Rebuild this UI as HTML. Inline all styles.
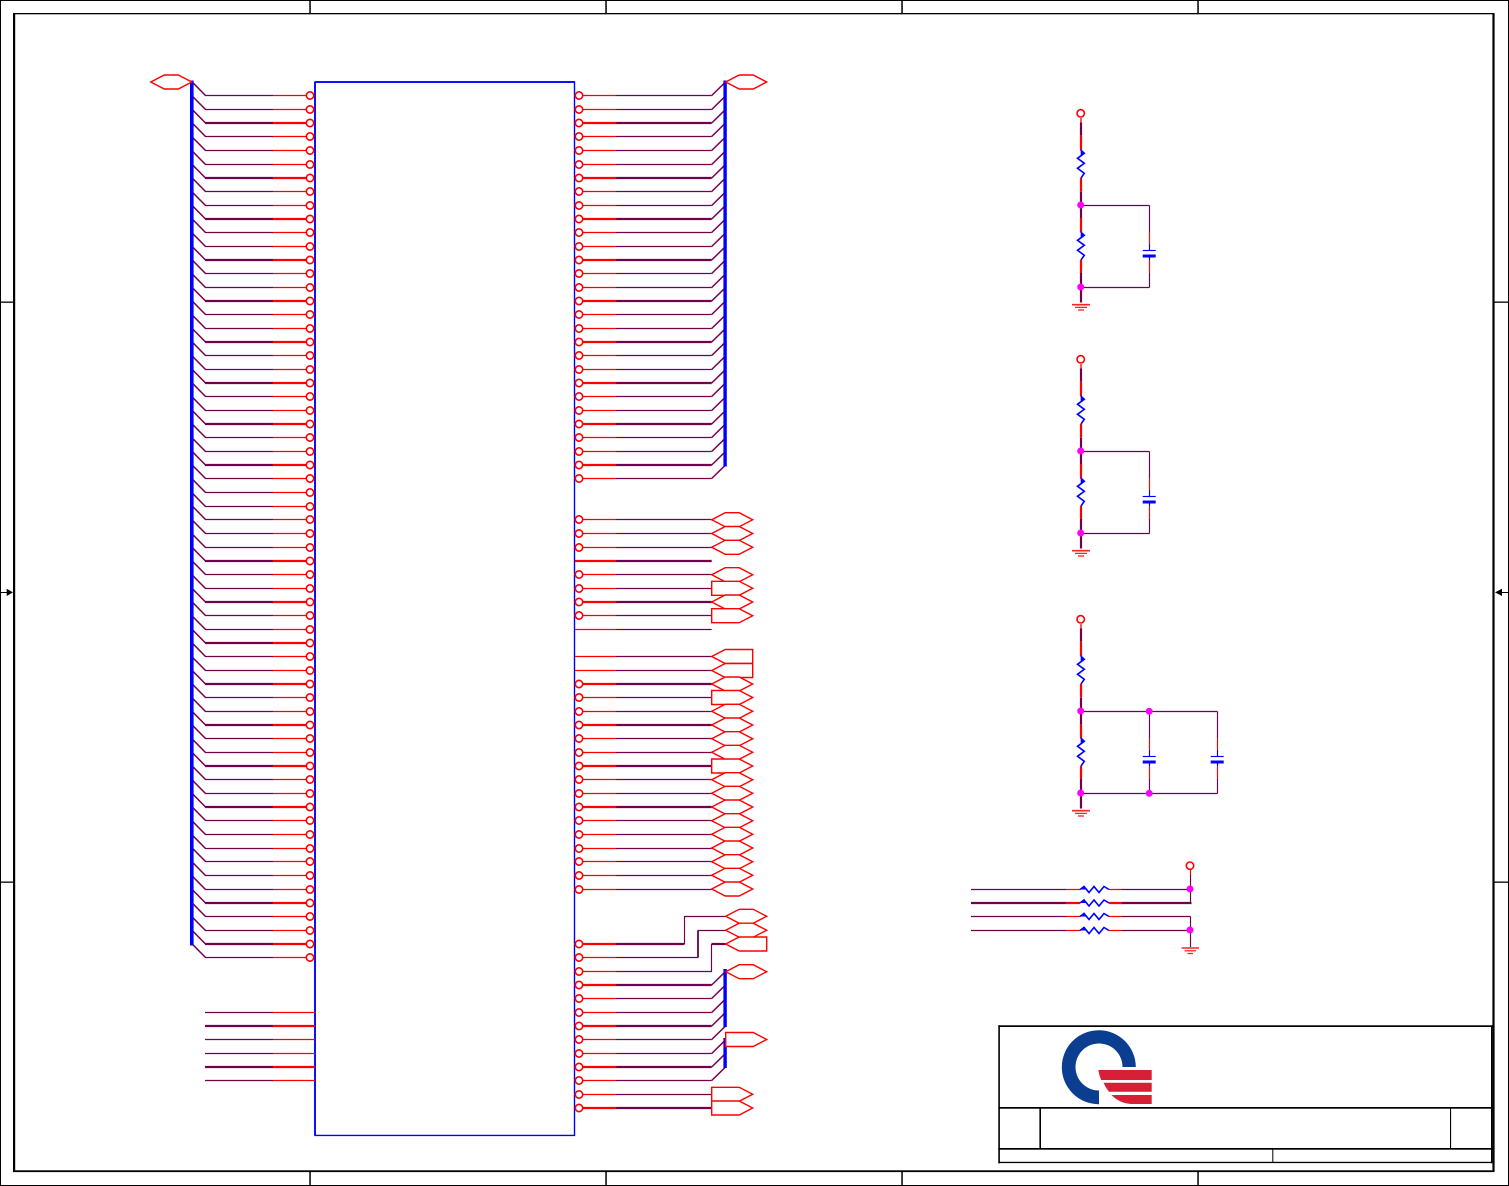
<!DOCTYPE html>
<html>
<head>
<meta charset="utf-8">
<title>Schematic</title>
<style>
html,body{margin:0;padding:0;background:#fff;width:1509px;height:1186px;overflow:hidden}
svg{display:block}
</style>
</head>
<body>
<svg xmlns="http://www.w3.org/2000/svg" width="1509" height="1186" viewBox="0 0 1509 1186" fill="none">
<defs>
<circle id="o" r="3.7" fill="#fff" stroke="#f00" stroke-width="1.6"/>
<g id="dl"><path d="M192 -13.7L205.5 0" stroke="#7a0050" stroke-width="1.5"/></g>
<g id="dr"><path d="M711.7 0L725.7 -13.7" stroke="#7a0050" stroke-width="1.5"/></g>
<g id="l"><use href="#dl"/><path d="M205 0H273" stroke="#72004a" stroke-width="1.15"/><path d="M273 0H307" stroke="#f00" stroke-width="1.15"/><use href="#o" x="310"/></g>
<g id="L"><use href="#dl"/><path d="M205 0H273" stroke="#72004a" stroke-width="2.2"/><path d="M273 0H307" stroke="#f00" stroke-width="2.2"/><use href="#o" x="310"/></g>
<g id="a"><path d="M205 0H273" stroke="#72004a" stroke-width="1.15"/><path d="M273 0H315" stroke="#f00" stroke-width="1.15"/></g>
<g id="A"><path d="M205 0H273" stroke="#72004a" stroke-width="2.2"/><path d="M273 0H315" stroke="#f00" stroke-width="2.2"/></g>
<g id="r0"><path d="M616 0H711.7" stroke="#72004a" stroke-width="1.15"/><path d="M582 0H616" stroke="#f00" stroke-width="1.15"/><use href="#o" x="579"/></g>
<g id="R0"><path d="M616 0H711.7" stroke="#72004a" stroke-width="2.2"/><path d="M582 0H616" stroke="#f00" stroke-width="2.2"/><use href="#o" x="579"/></g>
<g id="r"><use href="#r0"/><use href="#dr"/></g>
<g id="R"><use href="#R0"/><use href="#dr"/></g>
<g id="n"><path d="M616 0H711.7" stroke="#72004a" stroke-width="1.15"/><path d="M575 0H616" stroke="#f00" stroke-width="1.15"/></g>
<g id="N"><path d="M616 0H711.7" stroke="#72004a" stroke-width="2.2"/><path d="M575 0H616" stroke="#f00" stroke-width="2.2"/></g>
<polygon id="h" points="0,0 13.5,-7 27.5,-7 41,0 27.5,7 13.5,7" stroke="#f00" stroke-width="1.4" fill="#fff"/>
<polygon id="pr" points="0,-7 27.5,-7 41,0 27.5,7 0,7" stroke="#f00" stroke-width="1.4" fill="#fff"/>
<polygon id="pl" points="0,0 13.5,-7 41,-7 41,7 13.5,7" stroke="#f00" stroke-width="1.4" fill="#fff"/>
<g id="zv"><polygon points="1080.7,149.5 1084.4,153.3 1080.7,156" fill="#00f"/><path d="M1080.7 150L1084.3 153.3L1077.5 158.3L1084.3 163.3L1077.5 168.3L1084.3 173.3L1081 178" stroke="#00f" stroke-width="1.6"/></g>
<g id="zh"><polygon points="1080,0 1084,-4 1087.5,0" fill="#00f"/><path d="M1080 0L1084 -3L1089 3L1094 -3L1099 3L1104 -3L1109 0" stroke="#00f" stroke-width="1.6"/></g>
<g id="gnd"><path d="M1072 304.7H1090" stroke="#f22" stroke-width="1.6"/><path d="M1075 307.4H1087" stroke="#f22" stroke-width="1.3"/><path d="M1078 310H1084" stroke="#f22" stroke-width="1.3"/></g>
<g id="p">
<use href="#o" x="1080.7" y="113.3"/>
<path d="M1081 117V122.5" stroke="#f55" stroke-width="2"/>
<path d="M1081 122.5V135.7M1081 191.7V218M1081 273V302.5" stroke="#72004a" stroke-width="2.2"/>
<path d="M1081 135.7V150M1081 178V191.7M1081 218V232M1081 260V273" stroke="#f00" stroke-width="2.2"/>
<use href="#zv"/>
<use href="#zv" y="82"/>
<circle cx="1080.7" cy="205" r="3.5" fill="#f0f"/>
<circle cx="1080.7" cy="287" r="3.5" fill="#f0f"/>
<use href="#gnd"/>
</g>
<g id="cap">
<path d="M1149.5 205.5V232M1149.5 273V287.5" stroke="#72004a" stroke-width="1.15"/>
<path d="M1149.5 232V244M1149.5 260V273" stroke="#f00" stroke-width="1.15"/>
<path d="M1149.5 244V250M1149.5 257V260" stroke="#00f" stroke-width="1.15"/>
<path d="M1142.7 250.5H1155.7" stroke="#00f" stroke-width="1.15"/>
<path d="M1142.7 256H1155.7" stroke="#00f" stroke-width="3"/>
</g>
</defs>

<rect width="1509" height="1186" fill="#fff"/>

<!-- frame -->
<g fill="#000">
<rect x="0" y="0" width="1509" height="1"/>
<rect x="0" y="0" width="1" height="1186"/>
<rect x="1508" y="0" width="1" height="1186"/>
<rect x="0" y="1185" width="1509" height="1"/>
<rect x="13" y="13" width="1481" height="1.3"/>
<rect x="13" y="13" width="2.2" height="1159"/>
<rect x="1492.4" y="13" width="2.2" height="1159"/>
<rect x="13" y="1170.3" width="1481" height="1.8"/>
<rect x="309.3" y="0" width="1.5" height="13"/>
<rect x="605.3" y="0" width="1.5" height="13"/>
<rect x="901.3" y="0" width="1.5" height="13"/>
<rect x="1197.3" y="0" width="1.5" height="13"/>
<rect x="309.3" y="1172" width="1.5" height="13"/>
<rect x="605.3" y="1172" width="1.5" height="13"/>
<rect x="901.3" y="1172" width="1.5" height="13"/>
<rect x="1197.3" y="1172" width="1.5" height="13"/>
<rect x="0" y="301.5" width="13" height="1.3"/>
<rect x="0" y="881.5" width="13" height="1.3"/>
<rect x="1494" y="301.5" width="15" height="1.3"/>
<rect x="1494" y="881.5" width="15" height="1.3"/>
<rect x="0" y="592" width="7" height="1"/>
<polygon points="6.7,588.7 13,592.4 6.7,596"/>
<rect x="1502" y="592" width="7" height="1"/>
<polygon points="1502,588.7 1495,592.4 1502,596"/>
</g>

<!-- component box -->
<path d="M315 82H574.5V1135.4H315Z" stroke="#00f" stroke-width="1.4"/>
<path d="M315 82H574.5" stroke="#00f" stroke-width="1.8"/>
<path d="M315 82V1135" stroke="#00f" stroke-width="1.8"/>

<!-- left rows -->
<use href="#l" y="95.5"/><use href="#l" y="109.5"/><use href="#L" y="123"/><use href="#l" y="136.5"/><use href="#l" y="150.5"/><use href="#l" y="164.5"/><use href="#L" y="178"/><use href="#l" y="191.5"/><use href="#l" y="205.5"/><use href="#L" y="219"/><use href="#l" y="232.5"/><use href="#l" y="246.5"/><use href="#L" y="260"/><use href="#l" y="273.5"/><use href="#l" y="287.5"/><use href="#L" y="301"/><use href="#l" y="314.5"/><use href="#l" y="328.5"/><use href="#L" y="342"/><use href="#l" y="355.5"/><use href="#l" y="369.5"/><use href="#L" y="383"/><use href="#l" y="396.5"/><use href="#l" y="410.5"/><use href="#L" y="424"/><use href="#l" y="437.5"/><use href="#l" y="451.5"/><use href="#L" y="465"/><use href="#l" y="478.5"/><use href="#l" y="492.5"/><use href="#l" y="506.5"/><use href="#l" y="519.5"/><use href="#l" y="533.5"/><use href="#l" y="547.5"/><use href="#L" y="561"/><use href="#l" y="574.5"/><use href="#l" y="588.5"/><use href="#L" y="602"/><use href="#l" y="615.5"/><use href="#l" y="629.5"/><use href="#L" y="643"/><use href="#l" y="656.5"/><use href="#l" y="670.5"/><use href="#L" y="684"/><use href="#l" y="697.5"/><use href="#l" y="711.5"/><use href="#L" y="725"/><use href="#l" y="738.5"/><use href="#l" y="752.5"/><use href="#L" y="766"/><use href="#l" y="779.5"/><use href="#l" y="793.5"/><use href="#L" y="807"/><use href="#l" y="820.5"/><use href="#l" y="834.5"/><use href="#l" y="848.5"/><use href="#l" y="861.5"/><use href="#l" y="875.5"/><use href="#l" y="889.5"/><use href="#L" y="903"/><use href="#l" y="916.5"/><use href="#l" y="930.5"/><use href="#L" y="944"/><use href="#l" y="957.5"/>
<rect x="190" y="80.5" width="3.6" height="865" fill="#00f"/>
<use href="#h" x="150.8" y="82"/>
<use href="#a" y="1012.5"/><use href="#A" y="1026"/><use href="#a" y="1039.5"/><use href="#a" y="1053.5"/><use href="#A" y="1067"/><use href="#a" y="1080.5"/>

<!-- right rows with bus -->
<use href="#r" y="95.5"/><use href="#r" y="109.5"/><use href="#R" y="123"/><use href="#r" y="136.5"/><use href="#r" y="150.5"/><use href="#r" y="164.5"/><use href="#R" y="178"/><use href="#r" y="191.5"/><use href="#r" y="205.5"/><use href="#R" y="219"/><use href="#r" y="232.5"/><use href="#r" y="246.5"/><use href="#R" y="260"/><use href="#r" y="273.5"/><use href="#r" y="287.5"/><use href="#R" y="301"/><use href="#r" y="314.5"/><use href="#r" y="328.5"/><use href="#R" y="342"/><use href="#r" y="355.5"/><use href="#r" y="369.5"/><use href="#R" y="383"/><use href="#r" y="396.5"/><use href="#r" y="410.5"/><use href="#R" y="424"/><use href="#r" y="437.5"/><use href="#r" y="451.5"/><use href="#R" y="465"/><use href="#r" y="478.5"/>
<rect x="723.4" y="80.5" width="3.4" height="386" fill="#00f"/>
<use href="#h" x="725.7" y="82"/>

<!-- right rows with ports -->
<use href="#r0" y="519.5"/><use href="#r0" y="533.5"/><use href="#r0" y="547.5"/>
<use href="#N" y="561"/>
<use href="#r0" y="574.5"/><use href="#r0" y="588.5"/><use href="#R0" y="602"/><use href="#r0" y="615.5"/>
<use href="#n" y="629.5"/>
<use href="#n" y="656.5"/><use href="#n" y="670.5"/>
<use href="#R0" y="684"/><use href="#r0" y="697.5"/><use href="#r0" y="711.5"/><use href="#R0" y="725"/><use href="#r0" y="738.5"/><use href="#r0" y="752.5"/><use href="#R0" y="766"/><use href="#r0" y="779.5"/><use href="#r0" y="793.5"/><use href="#R0" y="807"/><use href="#r0" y="820.5"/><use href="#r0" y="834.5"/><use href="#r0" y="848.5"/><use href="#r0" y="861.5"/><use href="#r0" y="875.5"/><use href="#r0" y="889.5"/>

<use href="#h" x="711.7" y="519.7"/><use href="#h" x="711.7" y="533.5"/><use href="#h" x="711.7" y="547.3"/>
<use href="#h" x="711.7" y="574.7"/><use href="#pr" x="711.7" y="588.3"/><use href="#h" x="711.7" y="602"/><use href="#pr" x="711.7" y="615.7"/>
<use href="#pl" x="711.7" y="656.5"/><use href="#pl" x="711.7" y="670.5"/>
<use href="#h" x="711.7" y="684"/><use href="#pr" x="711.7" y="697.5"/><use href="#h" x="711.7" y="711.3"/><use href="#h" x="711.7" y="725"/><use href="#h" x="711.7" y="738.7"/><use href="#h" x="711.7" y="752.3"/><use href="#pr" x="711.7" y="766"/><use href="#h" x="711.7" y="779.7"/><use href="#h" x="711.7" y="793.3"/><use href="#h" x="711.7" y="807"/><use href="#h" x="711.7" y="820.7"/><use href="#h" x="711.7" y="834.3"/><use href="#h" x="711.7" y="848"/><use href="#h" x="711.7" y="861.7"/><use href="#h" x="711.7" y="875.3"/><use href="#h" x="711.7" y="889"/>

<!-- routed rows -->
<path d="M616 944H684.5" stroke="#72004a" stroke-width="2.2"/><path d="M582 944H616" stroke="#f00" stroke-width="2.2"/><use href="#o" x="579" y="944"/>
<path d="M684.5 944V916.5H725.7" stroke="#72004a" stroke-width="1.15"/>
<path d="M616 957.5H698V930.5H725.7" stroke="#72004a" stroke-width="1.15"/><path d="M698 957V931" stroke="#72004a" stroke-width="1.8"/><path d="M582 957.5H616" stroke="#f00" stroke-width="1.15"/><use href="#o" x="579" y="957.5"/>
<path d="M616 971.5H711.5V944" stroke="#72004a" stroke-width="1.15"/><path d="M711.5 944H725.7" stroke="#72004a" stroke-width="2.2"/><path d="M582 971.5H616" stroke="#f00" stroke-width="1.15"/><use href="#o" x="579" y="971.5"/>
<use href="#h" x="725.7" y="916.3"/><use href="#h" x="725.7" y="930.2"/><use href="#pl" x="725.7" y="944"/>

<use href="#R" y="985"/><use href="#r" y="998.5"/><use href="#r" y="1012.5"/><use href="#R" y="1026"/><use href="#r" y="1039.5"/><use href="#r" y="1053.5"/><use href="#R" y="1067"/><use href="#r" y="1080.5"/>
<rect x="723.4" y="969" width="3.4" height="58" fill="#00f"/>
<rect x="723.4" y="1038" width="3.4" height="30" fill="#00f"/>
<use href="#h" x="725.7" y="971.7"/>
<use href="#pr" x="725.7" y="1039.5"/>
<use href="#r0" y="1094.5"/><use href="#R0" y="1108"/>
<use href="#pr" x="711.7" y="1094.3"/><use href="#pr" x="711.7" y="1108"/>

<!-- power circuits -->
<path d="M1081 205.5H1149.5M1081 287.5H1149.5" stroke="#72004a" stroke-width="1.15"/>
<use href="#cap"/>
<use href="#p"/>
<g transform="translate(0 246)">
<path d="M1081 205.5H1149.5M1081 287.5H1149.5" stroke="#72004a" stroke-width="1.15"/>
<use href="#cap"/>
<use href="#p"/>
</g>
<g transform="translate(0 506)">
<path d="M1081 205.5H1217.5M1081 287.5H1217.5" stroke="#72004a" stroke-width="1.15"/>
<use href="#cap"/>
<use href="#cap" x="68"/>
<use href="#p"/>
<circle cx="1149.2" cy="205.3" r="3.5" fill="#f0f"/>
<circle cx="1149.2" cy="287.3" r="3.5" fill="#f0f"/>
</g>

<!-- resistor network -->
<path d="M971 889.5H1066.7M1122 889.5H1190.5M971 916.5H1066.7M1122 916.5H1190.5M971 930.5H1066.7M1122 930.5H1190.5" stroke="#72004a" stroke-width="1.15"/>
<path d="M971 903H1066.7M1122 903H1191.5" stroke="#72004a" stroke-width="2.2"/>
<path d="M1066.7 889.5H1080M1109 889.5H1122M1066.7 916.5H1080M1109 916.5H1122M1066.7 930.5H1080M1109 930.5H1122" stroke="#f00" stroke-width="1.15"/>
<path d="M1066.7 903H1080M1109 903H1122" stroke="#f00" stroke-width="2.2"/>
<use href="#zh" y="889.5"/><use href="#zh" y="903"/><use href="#zh" y="916.5"/><use href="#zh" y="930.5"/>
<path d="M1190.5 875V903M1190.5 916.5V947" stroke="#72004a" stroke-width="1.15"/>
<path d="M1190.5 869V875" stroke="#f00" stroke-width="1.15"/>
<use href="#o" x="1190" y="865.7"/>
<circle cx="1190" cy="889" r="3.5" fill="#f0f"/>
<circle cx="1190" cy="930" r="3.5" fill="#f0f"/>
<path d="M1181.7 948H1199" stroke="#f22" stroke-width="1.6"/><path d="M1184.5 950.8H1196" stroke="#f22" stroke-width="1.3"/><path d="M1187.5 953.5H1193" stroke="#f22" stroke-width="1.3"/>

<!-- title block -->
<g fill="#000">
<rect x="998.3" y="1025.3" width="494.2" height="1.7"/>
<rect x="998.3" y="1025.3" width="1.6" height="138"/>
<rect x="1491" y="1025.3" width="1.4" height="138"/>
<rect x="998.3" y="1161.8" width="494" height="1.3"/>
<rect x="998.3" y="1107" width="494" height="1.7"/>
<rect x="998.3" y="1148" width="494" height="1.7"/>
<rect x="1039.4" y="1107" width="1.6" height="42"/>
<rect x="1450" y="1107" width="1.1" height="42"/>
<rect x="1272.3" y="1149" width="1" height="13"/>
</g>

<!-- logo -->
<path d="M1135.8 1067A37 37 0 1 0 1099 1104.2V1090.5A23.5 23.5 0 1 1 1122.5 1067Z" fill="#0b3e91"/>
<g fill="#d71f35">
<path d="M1098.3 1070H1151.7V1080H1101.2Q1099 1075 1098.3 1070Z"/>
<path d="M1103.5 1082.7H1151.7V1091.7H1109Q1105.5 1087.5 1103.5 1082.7Z"/>
<path d="M1111.5 1095H1151.7V1104H1131Q1119 1103 1111.5 1095Z"/>
</g>
</svg>
</body>
</html>
